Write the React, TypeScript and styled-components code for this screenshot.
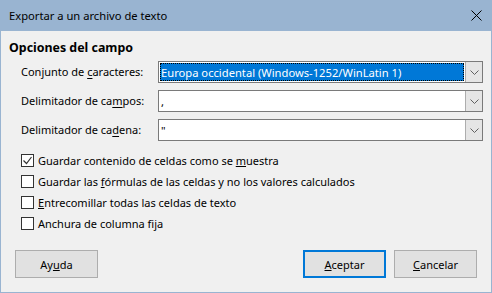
import React from "react";
import styled, { createGlobalStyle } from "styled-components";

const GlobalStyle = createGlobalStyle`
  html, body {
    margin: 0;
    padding: 0;
    background: #f0f0f0;
  }
  body {
    font-family: "Noto Sans", "Liberation Sans", Arial, sans-serif;
    font-size: 11px;
    color: #000;
  }
`;

export default function App() {
  return (
    <>
      <GlobalStyle />
      <SWindow>
        <STitleBar>
          <STitle>Exportar a un archivo de texto</STitle>
          <SClose aria-label="Cerrar">
            <svg width="11" height="11" viewBox="0 0 11 11">
              <path d="M0.5 0.5 L10.5 10.5 M10.5 0.5 L0.5 10.5" stroke="#000" strokeWidth="1" />
            </svg>
          </SClose>
        </STitleBar>
        <SBody>
          <SHeading>Opciones del campo</SHeading>
          <SForm>
            <SLabel>
              Conjunto de <u>c</u>aracteres:
            </SLabel>
            <Combo value="Europa occidental (Windows-1252/WinLatin 1)" selected />
            <SLabel>
              Delimitador de ca<u>m</u>pos:
            </SLabel>
            <Combo value="," />
            <SLabel>
              Delimitador de ca<u>d</u>ena:
            </SLabel>
            <Combo value={'"'} />
          </SForm>
          <SChecks>
            <Check checked>
              Guardar contenido de celdas como se <u>m</u>uestra
            </Check>
            <Check>
              Guardar las <u>f</u>órmulas de las celdas y no los valores calculados
            </Check>
            <Check>
              <u>E</u>ntrecomillar todas las celdas de texto
            </Check>
            <Check>Anchura de columna fija</Check>
          </SChecks>
          <SButtons>
            <SButton>
              Ay<u>u</u>da
            </SButton>
            <SSpacer />
            <SButton $default>
              <u>A</u>ceptar
            </SButton>
            <SButton>
              <u>C</u>ancelar
            </SButton>
          </SButtons>
        </SBody>
      </SWindow>
    </>
  );
}

function Combo({ value, selected }: { value: string; selected?: boolean }) {
  return (
    <SCombo>
      <SComboValue $selected={selected}>
        <span>{value}</span>
      </SComboValue>
      <SComboButton>
        <svg width="9" height="5" viewBox="0 0 9 5">
          <path d="M0.5 0.5 L4.5 4.5 L8.5 0.5" fill="none" stroke="#606060" strokeWidth="1" />
        </svg>
      </SComboButton>
    </SCombo>
  );
}

function Check({ checked, children }: { checked?: boolean; children: React.ReactNode }) {
  return (
    <SCheckRow>
      <SBox>
        {checked && (
          <svg width="11" height="11" viewBox="0 0 11 11">
            <path d="M1.5 5.5 L4.5 8.5 L9.5 2" fill="none" stroke="#333" strokeWidth="1.2" />
          </svg>
        )}
      </SBox>
      <span>{children}</span>
    </SCheckRow>
  );
}

const SWindow = styled.div`
  width: 492px;
  height: 293px;
  box-sizing: border-box;
  border: 1px solid #99b4d1;
  border-top: none;
  display: flex;
  flex-direction: column;
  background: #f0f0f0;
`;

const STitleBar = styled.div`
  height: 31px;
  margin: 0 -1px;
  background: #99b4d1;
  display: flex;
  align-items: center;
  justify-content: space-between;
  padding: 0 10px 0 9px;
`;

const STitle = styled.div`
  font-size: 11.2px;
  color: #000;
`;

const SClose = styled.div`
  width: 11px;
  height: 11px;
  display: flex;
`;

const SBody = styled.div`
  flex: 1;
  display: flex;
  flex-direction: column;
  padding: 10px 8px 14px 8px;
`;

const SHeading = styled.div`
  font-weight: bold;
  font-size: 12.4px;
  line-height: 14px;
`;

const SForm = styled.div`
  display: grid;
  grid-template-columns: 137px 1fr;
  row-gap: 7px;
  align-items: center;
  margin: 6px 0 0 12px;
`;

const SLabel = styled.div`
  line-height: 14px;
  u {
    text-underline-offset: 2px;
  }
`;

const SCombo = styled.div`
  height: 22px;
  box-sizing: border-box;
  border: 1px solid #7a7a7a;
  background: #fff;
  display: flex;
`;

const SComboValue = styled.div<{ $selected?: boolean }>`
  flex: 1;
  display: flex;
  align-items: center;
  padding: 1px;
  span {
    flex: 1;
    align-self: stretch;
    display: flex;
    align-items: center;
    padding-left: 1px;
    font-size: 11.2px;
    background: ${(p) => (p.$selected ? "#0078d7" : "transparent")};
    color: ${(p) => (p.$selected ? "#fff" : "#000")};
    outline: ${(p) => (p.$selected ? "1px dotted #000" : "none")};
    outline-offset: -1px;
  }
`;

const SComboButton = styled.div`
  width: 17px;
  box-sizing: border-box;
  border-left: 1px solid #adadad;
  background: #e5e5e5;
  display: flex;
  align-items: center;
  justify-content: center;
`;

const SChecks = styled.div`
  display: flex;
  flex-direction: column;
  gap: 8px;
  margin: 13px 0 0 12px;
`;

const SCheckRow = styled.div`
  display: flex;
  align-items: center;
  gap: 4px;
  height: 13px;
`;

const SBox = styled.div`
  width: 13px;
  height: 13px;
  box-sizing: border-box;
  border: 1px solid #333;
  background: #fff;
  display: flex;
  align-items: center;
  justify-content: center;
`;

const SButtons = styled.div`
  margin-top: auto;
  display: flex;
  gap: 8px;
  padding: 0 6px;
`;

const SSpacer = styled.div`
  flex: 1;
`;

const SButton = styled.button<{ $default?: boolean }>`
  width: 83px;
  height: 28px;
  box-sizing: border-box;
  font: inherit;
  color: #000;
  background: #e1e1e1;
  border: ${(p) => (p.$default ? "2px solid #0078d7" : "1px solid #adadad")};
  padding: 0;
`;
